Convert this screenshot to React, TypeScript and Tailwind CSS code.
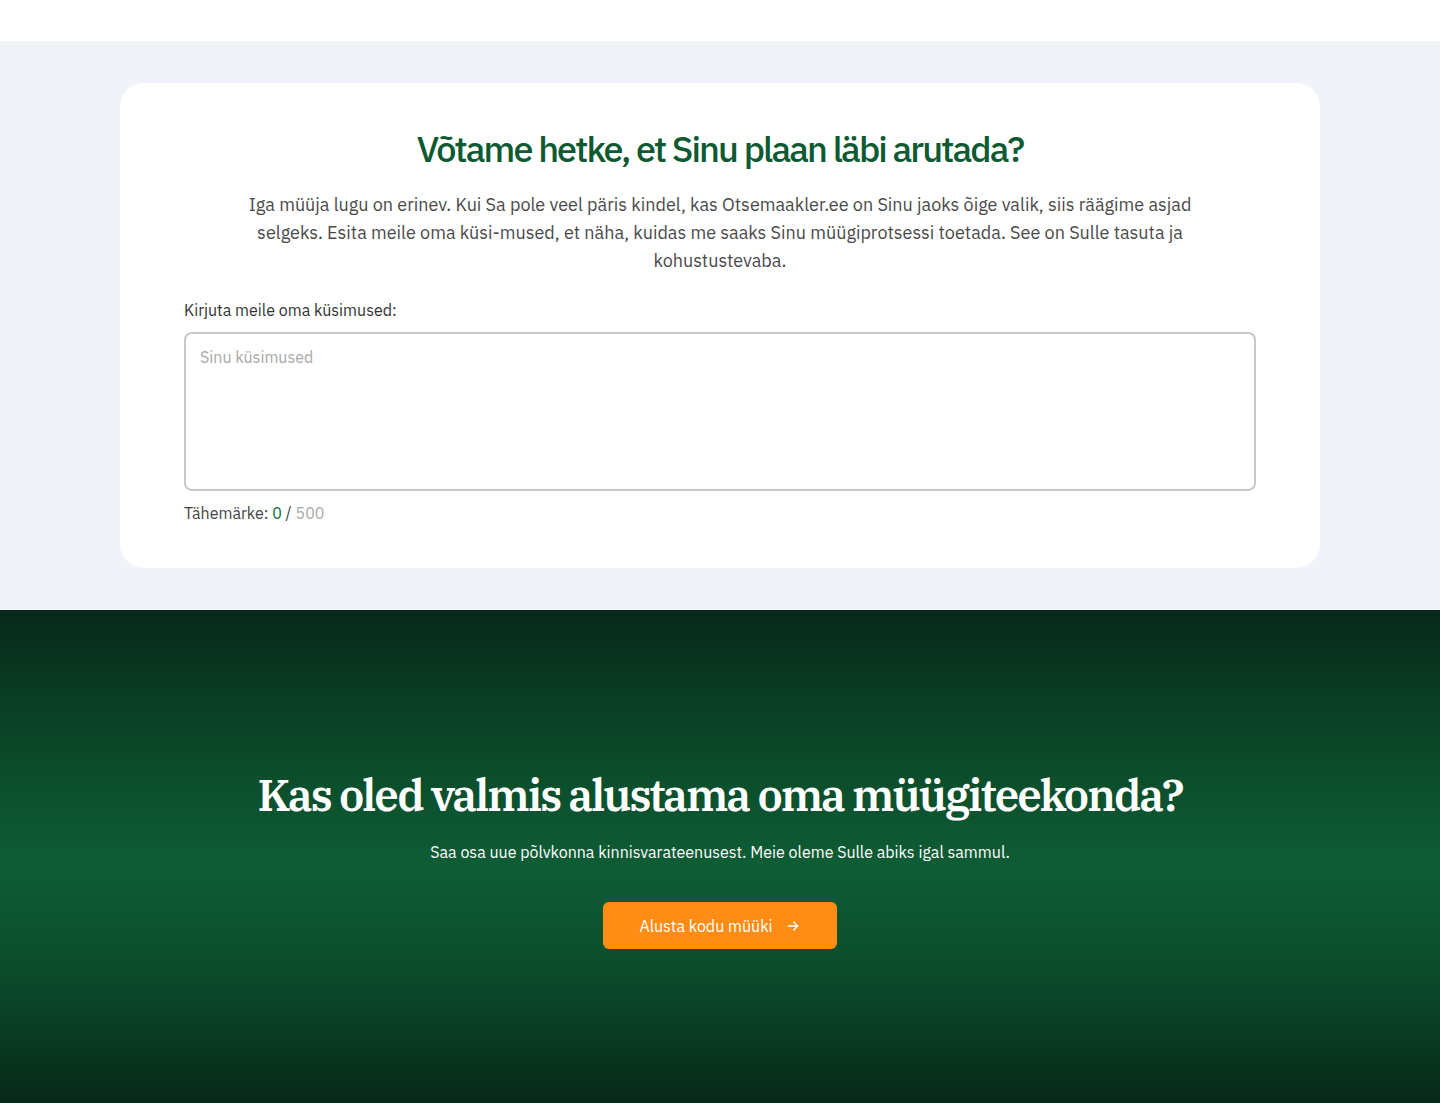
import React from 'react';

const sans = { fontFamily: '"IBM Plex Sans", "Noto Sans", Roboto, sans-serif' };

export default function App() {
  return (
    <div className="min-h-screen bg-white" style={sans}>
      <div className="h-[41px] bg-white" />

      <section className="bg-[#f0f4f8] py-[42px]">
        <div className="mx-auto w-[1200px] rounded-[24px] bg-white px-16 pt-[42px] pb-[43px]">
          <h2 className="text-center text-[36px] font-medium leading-[48px] tracking-[-0.053em] text-[#0d5a32]">
            Võtame hetke, et Sinu plaan läbi arutada?
          </h2>
          <p className="mx-auto mt-[18px] max-w-[960px] text-center text-[18px] leading-[28px] text-[#4a4a4a]">
            Iga müüja lugu on erinev. Kui Sa pole veel päris kindel, kas Otsemaakler.ee on Sinu jaoks õige valik, siis räägime asjad selgeks. Esita meile oma küsi-mused, et näha, kuidas me saaks Sinu müügiprotsessi toetada. See on Sulle tasuta ja kohustustevaba.
          </p>

          <label className="mt-[23px] block text-[16px] leading-[24px] text-[#333]">
            Kirjuta meile oma küsimused:
          </label>
          <textarea
            placeholder="Sinu küsimused"
            className="mt-[10px] block h-[159px] w-full resize-none rounded-[8px] border-2 border-[#c8c8c8] px-[14px] py-[11px] text-[16px] leading-[24px] text-[#333] outline-none placeholder:text-[#a9a9a9]"
          />
          <div className="mt-[10px] text-[16px] leading-[24px] text-[#444]">
            Tähemärke: <span className="text-[#0d6b3c]">0</span> / <span className="text-[#a9a9a9]">500</span>
          </div>
        </div>
      </section>

      <section className="flex h-[493px] flex-col items-center bg-[linear-gradient(180deg,#07291a_0%,#0b4a2a_30%,#0e5d35_52%,#0b4a2b_75%,#072818_100%)] pt-[157px]">
        <h2
          className="text-center text-[44px] font-semibold leading-[56px] tracking-[-0.045em] text-white"
          style={{ fontFamily: '"IBM Plex Serif", "DejaVu Serif", "Liberation Serif", serif' }}
        >
          Kas oled valmis alustama oma müügiteekonda?
        </h2>
        <p className="mt-[17px] text-center text-[16px] leading-[24px] text-white">
          Saa osa uue põlvkonna kinnisvarateenusest. Meie oleme Sulle abiks igal sammul.
        </p>
        <button className="mt-[38px] flex h-[47px] w-[234px] items-center justify-center gap-[12px] rounded-[6px] bg-[#ff8c14] text-[16px] text-white">
          <span>Alusta kodu müüki</span>
          <svg width="16" height="16" viewBox="0 0 24 24" fill="none" stroke="currentColor" strokeWidth="2" strokeLinecap="round" strokeLinejoin="round">
            <path d="M5 12h14" />
            <path d="M13 6l6 6-6 6" />
          </svg>
        </button>
      </section>
    </div>
  );
}
